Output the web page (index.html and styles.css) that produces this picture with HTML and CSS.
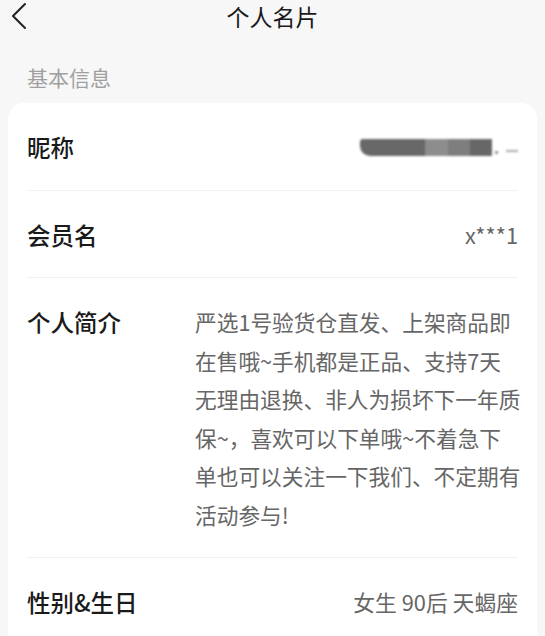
FILE: index.html
```html
<!DOCTYPE html>
<html lang="zh-CN">
<head>
<meta charset="utf-8">
<title>个人名片</title>
<link rel="stylesheet" href="styles.css">
</head>
<body>
<div class="nav">
  <div class="back">
    <svg width="24" height="30" viewBox="0 0 24 30"><polyline points="17,3 5,15 17,27" fill="none" stroke="#222" stroke-width="2" stroke-linecap="round" stroke-linejoin="round"/></svg>
  </div>
  <div class="title">个人名片</div>
  <div></div>
</div>
<div class="section">基本信息</div>
<div class="card">
  <div class="row">
    <div class="label">昵称</div>
    <div class="blur">
      <span class="b1"></span><span class="b2"></span><span class="b3"></span><span class="b4"></span><span class="dot"></span><span class="dash"></span>
    </div>
  </div>
  <div class="row">
    <div class="label">会员名</div>
    <div class="value">x***1</div>
  </div>
  <div class="row">
    <div class="label wide">个人简介</div>
    <div class="bio">严选1号验货仓直发、上架商品即<br>在售哦~手机都是正品、支持7天<br>无理由退换、非人为损坏下一年质<br>保~，喜欢可以下单哦~不着急下<br>单也可以关注一下我们、不定期有<br>活动参与!</div>
  </div>
  <div class="row last">
    <div class="label">性别&amp;生日</div>
    <div class="value">女生 90后 天蝎座</div>
  </div>
</div>
</body>
</html>
```
FILE: styles.css
```css
html, body {
  margin: 0;
  padding: 0;
  background: #f7f7f7;
  font-family: "Noto Sans CJK SC", "Noto Sans", sans-serif;
  height: 636px;
  overflow: hidden;
}
.nav {
  display: grid;
  grid-template-columns: 60px 1fr 60px;
  height: 32px;
  align-items: center;
}
.back {
  padding-left: 8px;
  display: flex;
  align-items: center;
  height: 32px;
}
.back svg { display: block; }
.title {
  text-align: center;
  font-size: 23px;
  line-height: 32px;
  color: #1a1a1a;
}
.section {
  padding: 30px 0 11px 27px;
  font-size: 21px;
  line-height: 30px;
  color: #a0a0a0;
}
.card {
  margin: 0 8px;
  background: #fff;
  border-radius: 16px 16px 0 0;
  padding: 0 19px;
  height: 560px;
}
.row {
  display: flex;
  justify-content: space-between;
  align-items: flex-start;
  padding: 25px 0 23px;
  line-height: 38.5px;
  border-bottom: 1px solid #f1f1f1;
}
.row.last { border-bottom: none; }
.label {
  font-size: 23.5px;
  font-weight: 500;
  color: #1a1a1a;
  white-space: nowrap;
  height: 38.5px;
}
.label.wide { width: 168px; flex: none; }
.value {
  font-size: 21.8px;
  color: #666;
  white-space: nowrap;
  height: 38.5px;
}
.bio {
  flex: 1;
  font-size: 21.7px;
  color: #666;
  white-space: nowrap;
}
.blur {
  display: flex;
  align-items: center;
  height: 38.5px;
  filter: blur(1.3px);
}
.blur span { display: block; height: 17px; }
.b1 { width: 65px; background: #686868; border-radius: 3px 0 0 10px; }
.b2 { width: 23px; background: #8d8d8d; }
.b3 { width: 22px; background: #7e7e7e; }
.b4 { width: 22px; background: #676767; }
.blur .dot { width: 3px; height: 3px; background: #999; margin: 10px 0 0 3px; }
.blur .dash { width: 12px; height: 2px; background: #aaa; margin: 8px 0 0 8px; }
```
